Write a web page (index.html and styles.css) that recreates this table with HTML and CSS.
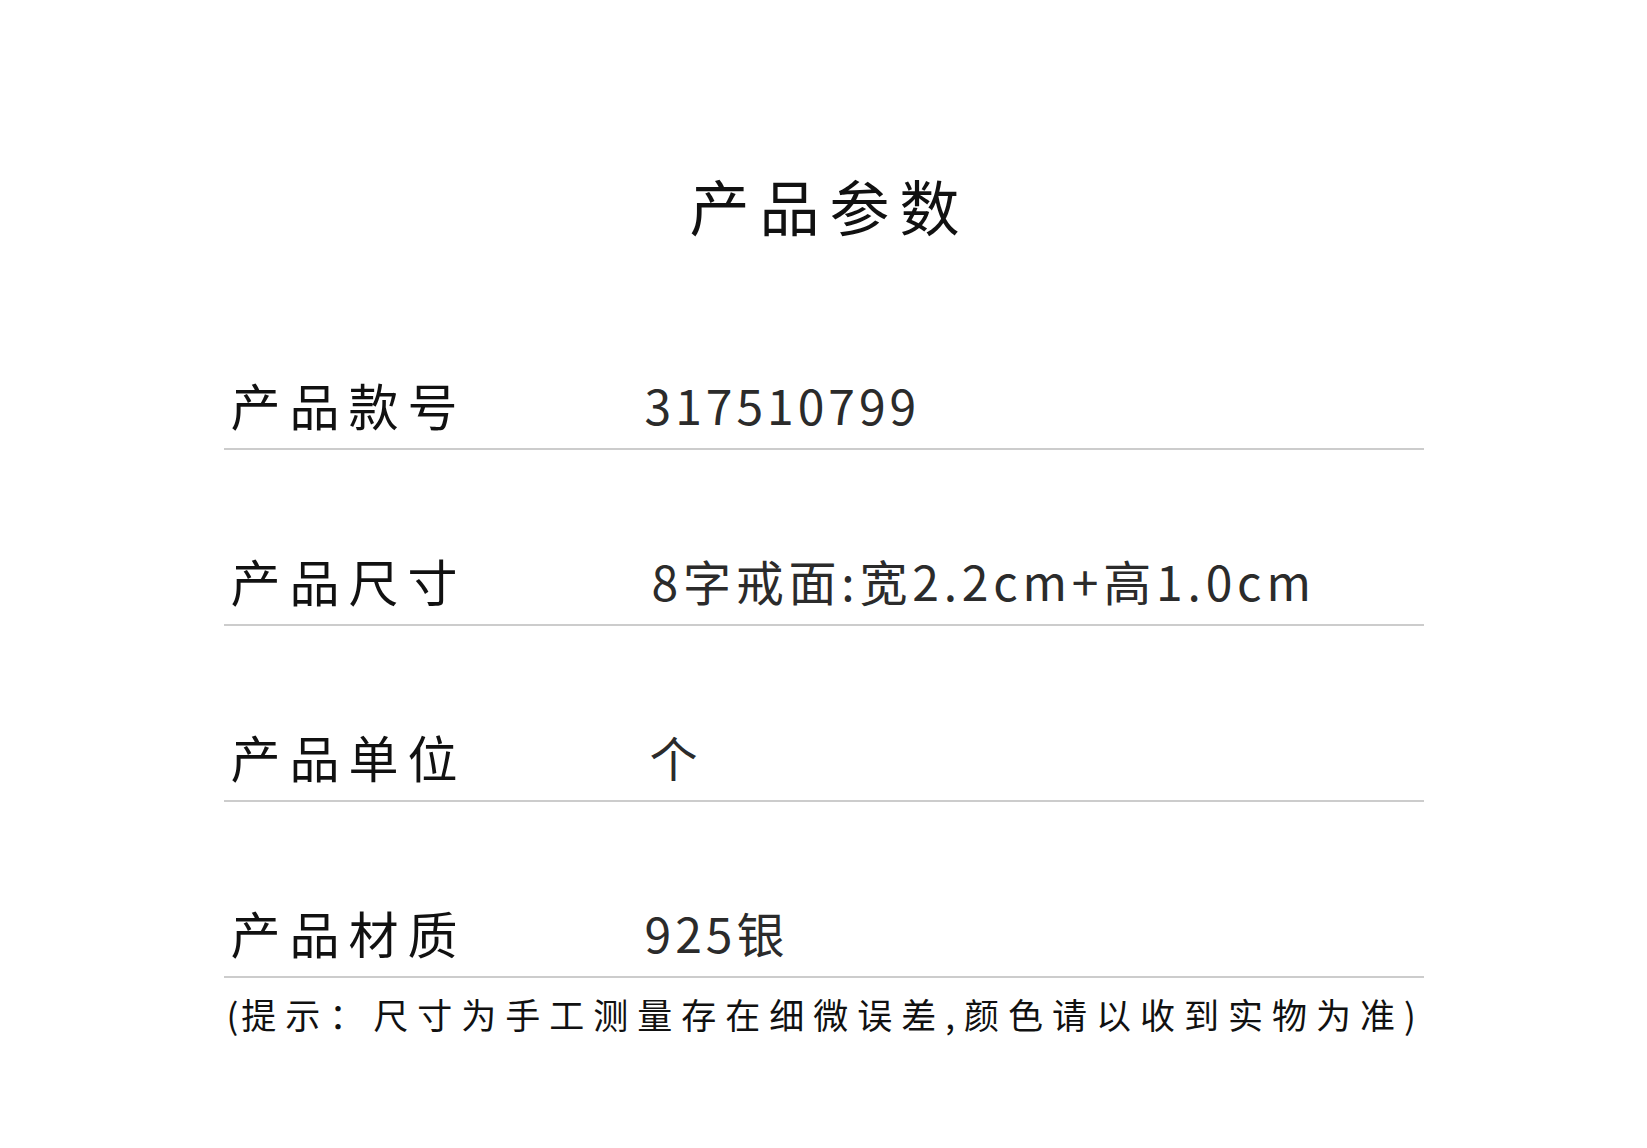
FILE: index.html
```html
<!DOCTYPE html>
<html lang="zh-CN">
<head>
    <meta charset="UTF-8">
    <meta name="viewport" content="width=device-width, initial-scale=1.0">
    <title>产品参数</title>
    <link rel="stylesheet" href="styles.css">
</head>
<body>
    <div class="container">
        <h1 class="title">产品参数</h1>

        <!-- 参数列表 -->
        <div class="param-list">
            <div class="param">
                <span class="param-name">产品款号</span>
                <span class="param-value">317510799</span>
            </div>
            <div class="param">
                <span class="param-name">产品尺寸</span>
                <span class="param-value param-value--wide">8字戒面:宽2.2cm+高1.0cm</span>
            </div>
            <div class="param">
                <span class="param-name">产品单位</span>
                <span class="param-value param-value--cjk">个</span>
            </div>
            <div class="param">
                <span class="param-name">产品材质</span>
                <span class="param-value">925银</span>
            </div>
        </div>

        <p class="note"><span class="paren">(</span>提示：尺寸为手工测量存在细微误差,颜色请以收到实物为准<span class="paren">)</span></p>
    </div>
</body>
</html>
```

FILE: styles.css
```css
body {
    font-family: "Noto Sans CJK SC", "Noto Sans", sans-serif;
    background-color: #fff;
    color: #111;
    margin: 0;
    padding: 0;
}
.container {
    width: 1200px;
    margin: 0 auto;
    padding-top: 165px;
}
.title {
    margin: 0 0 29px 0;
    text-align: center;
    font-size: 60px;
    font-weight: 400;
    line-height: 80px;
    letter-spacing: 10px;
    padding-left: 12px;
    color: #111;
}
.param {
    display: flex;
    align-items: center;
    height: 60px;
    padding: 100px 0 14px 7px;
    border-bottom: 2px solid #cccccc;
}
.param-name {
    width: 414px;
    font-size: 50px;
    line-height: 60px;
    letter-spacing: 9px;
    color: #111;
}
.param-value {
    font-size: 48px;
    line-height: 60px;
    letter-spacing: 4px;
    color: #2b2b2b;
}
.param-value--wide {
    margin-left: 7px;
    letter-spacing: 4.8px;
}
.param-value--cjk {
    margin-left: 5px;
}
.note {
    margin: 11px 0 0 0;
    padding-left: 3px;
    font-size: 35px;
    line-height: 50px;
    letter-spacing: 9px;
    white-space: nowrap;
    color: #111;
}
.note .paren {
    letter-spacing: 3px;
}
```
